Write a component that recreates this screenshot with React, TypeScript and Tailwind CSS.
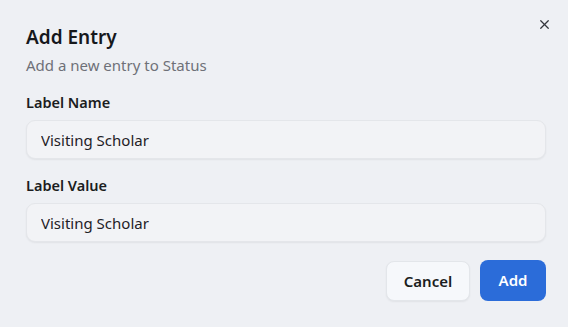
import { X } from 'lucide-react';

const font = { fontFamily: '"Noto Sans", "Open Sans", sans-serif' };

const Field = ({ label, value }: { label: string; value: string }) => (
  <div className="flex flex-col">
    <label className="text-[14.5px] font-semibold text-[#1b1d21] leading-[20px] mb-[8px]">{label}</label>
    <input
      readOnly
      value={value}
      className="h-[39px] w-full rounded-[9px] border border-[#e4e6ea] bg-[#f2f3f6] px-[14px] text-[15px] text-[#1f2126] shadow-[0_1px_2px_rgba(0,0,0,0.06)] outline-none"
    />
  </div>
);

export default function App() {
  return (
    <div className="w-[568px] h-[327px] bg-[#eef0f4] relative" style={font}>
      <button className="absolute right-[16px] top-[17px] text-[#33363c]">
        <X className="h-[15px] w-[15px]" strokeWidth={2} />
      </button>
      <div className="flex flex-col pl-[26px] pr-[22px] pt-[24px]">
        <h2 className="text-[19px] font-semibold text-[#16181c] leading-[26px]">Add Entry</h2>
        <p className="mt-[5px] text-[15px] text-[#6e7178] leading-[20px]">Add a new entry to Status</p>
        <div className="mt-[17px] flex flex-col gap-[16px]">
          <Field label="Label Name" value="Visiting Scholar" />
          <Field label="Label Value" value="Visiting Scholar" />
        </div>
        <div className="mt-[19px] flex justify-end gap-[10px]">
          <button className="h-[40px] w-[84px] rounded-[8px] border border-[#e3e6ea] bg-[#f6f8fb] text-[15px] font-semibold text-[#1b1d21] shadow-[0_1px_2px_rgba(0,0,0,0.06)]">
            Cancel
          </button>
          <button className="h-[41px] w-[66px] -mt-[1px] rounded-[8px] bg-[#2b6cd9] text-[15px] font-semibold text-white">
            Add
          </button>
        </div>
      </div>
    </div>
  );
}
